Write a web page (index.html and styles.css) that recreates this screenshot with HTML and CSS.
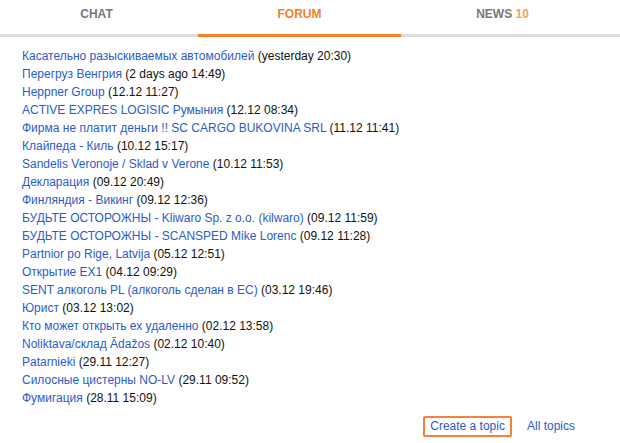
FILE: index.html
```html
<!DOCTYPE html>
<html>
<head>
<meta charset="utf-8">
<link rel="stylesheet" href="styles.css">
</head>
<body>
<div class="tabs">
  <div class="tab first">CHAT</div>
  <div class="tab active">FORUM</div>
  <div class="tab">NEWS <span class="count">10</span></div>
</div>
<ul class="topics">
  <li><a href="#">Касательно разыскиваемых автомобилей</a> (yesterday 20:30)</li>
  <li><a href="#">Перегруз Венгрия</a> (2 days ago 14:49)</li>
  <li><a href="#">Heppner Group</a> (12.12 11:27)</li>
  <li><a href="#">ACTIVE EXPRES LOGISIC Румыния</a> (12.12 08:34)</li>
  <li><a href="#">Фирма не платит деньги !! SC CARGO BUKOVINA SRL</a> (11.12 11:41)</li>
  <li><a href="#">Клайпеда - Киль</a> (10.12 15:17)</li>
  <li><a href="#">Sandelis Veronoje / Sklad v Verone</a> (10.12 11:53)</li>
  <li><a href="#">Декларация</a> (09.12 20:49)</li>
  <li><a href="#">Финляндия - Викинг</a> (09.12 12:36)</li>
  <li><a href="#">БУДЬТЕ ОСТОРОЖНЫ - Kliwaro Sp. z o.o. (kilwaro)</a> (09.12 11:59)</li>
  <li><a href="#">БУДЬТЕ ОСТОРОЖНЫ - SCANSPED Mike Lorenc</a> (09.12 11:28)</li>
  <li><a href="#">Partnior po Rige, Latvija</a> (05.12 12:51)</li>
  <li><a href="#">Открытие EX1</a> (04.12 09:29)</li>
  <li><a href="#">SENT алкоголь PL (алкоголь сделан в ЕС)</a> (03.12 19:46)</li>
  <li><a href="#">Юрист</a> (03.12 13:02)</li>
  <li><a href="#">Кто может открыть ех удаленно</a> (02.12 13:58)</li>
  <li><a href="#">Noliktava/склад Ādažos</a> (02.12 10:40)</li>
  <li><a href="#">Patarnieki</a> (29.11 12:27)</li>
  <li><a href="#">Силосные цистерны NO-LV</a> (29.11 09:52)</li>
  <li><a href="#">Фумигация</a> (28.11 15:09)</li>
</ul>
<div class="actions">
  <a href="#" class="btn">Create a topic</a>
  <a href="#" class="all">All topics</a>
</div>
</body>
</html>
```
FILE: styles.css
```css
body {
  margin: 0;
  background: #fff;
  font-family: "Liberation Sans", Arial, sans-serif;
  font-size: 12px;
  color: #111;
}
.tabs {
  display: flex;
  border-bottom: 3px solid #dcdcdc;
  height: 34px;
}
.tab {
  flex: none;
  width: 203px;
  height: 34px;
  line-height: 28px;
  text-align: center;
  font-weight: bold;
  font-size: 12px;
  color: #777;
  border-bottom: 3px solid transparent;
}
.tab.first {
  margin-left: -5px;
}
.tab.active {
  color: #f58025;
  border-bottom-color: #f58025;
}
.count {
  color: #f7a05a;
}
.topics {
  list-style: none;
  margin: 10px 0 0;
  padding: 0 0 0 22px;
  line-height: 18px;
}
.topics a {
  color: #2b5cc9;
  text-decoration: none;
}
.actions {
  display: flex;
  justify-content: flex-end;
  align-items: center;
  margin-top: 9px;
  padding-right: 45px;
}
.btn {
  border: 2px solid #f7803c;
  border-radius: 2px;
  padding: 0 5px;
  line-height: 17px;
  color: #2b5cc9;
  text-decoration: none;
}
.all {
  margin-left: 15px;
  color: #2b5cc9;
  text-decoration: none;
  line-height: 21px;
}
```
